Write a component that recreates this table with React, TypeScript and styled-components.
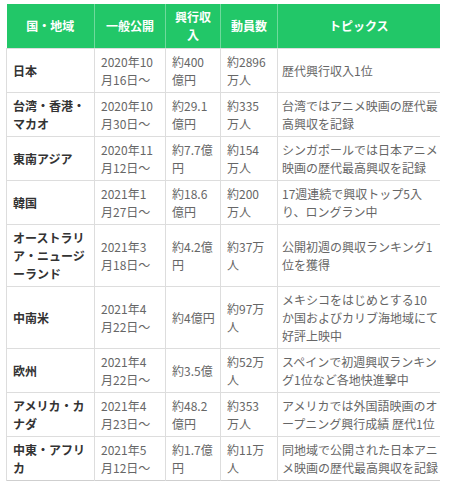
import React from 'react';
import styled, { createGlobalStyle } from 'styled-components';

const GlobalStyle = createGlobalStyle`
    html, body {
        margin: 0;
        padding: 0;
        background: #ffffff;
    }
    body {
        font-family: 'Noto Sans CJK JP', 'Noto Sans', sans-serif;
    }
`;

const Wrapper = styled.div`
    padding: 4px 0 0 6px;
`;

const Table = styled.table`
    width: 433px;
    table-layout: fixed;
    border-collapse: collapse;
    font-size: 12px;
    line-height: 18px;
    border-bottom: 1px solid #cfcfcf;
`;

const HeadCell = styled.th`
    background: #22c768;
    color: #ffffff;
    font-weight: bold;
    text-align: center;
    vertical-align: middle;
    height: 36px;
    padding: 4px 6px;
    line-height: 18px;
    white-space: nowrap;
    border-left: 1px solid rgba(255, 255, 255, 0.35);
    border-bottom: 1px solid #dddddd;

    &:first-child {
        border-left: none;
    }
`;

const Row = styled.tr`
    border-top: 1px solid #dddddd;
`;

const Cell = styled.td<{ $head?: boolean; $topic?: boolean }>`
    padding: 4px ${(p) => (p.$topic ? '4px' : '6px')} 3px;
    vertical-align: middle;
    text-align: left;
    white-space: nowrap;
    line-height: 18px;
    color: ${(p) => (p.$head ? '#333333' : '#666666')};
    font-weight: ${(p) => (p.$head ? 'bold' : 'normal')};
    border-left: 1px solid #dddddd;
`;

const Line = styled.span`
    display: block;
    height: 18px;
`;

interface Entry {
    region: string[];
    release: string[];
    gross: string[];
    admissions: string[];
    topic: string[];
}

const entries: Entry[] = [
    {
        region: ['日本'],
        release: ['2020年10', '月16日～'],
        gross: ['約400', '億円'],
        admissions: ['約2896', '万人'],
        topic: ['歴代興行収入1位']
    },
    {
        region: ['台湾・香港・', 'マカオ'],
        release: ['2020年10', '月30日～'],
        gross: ['約29.1', '億円'],
        admissions: ['約335', '万人'],
        topic: ['台湾ではアニメ映画の歴代最', '高興収を記録']
    },
    {
        region: ['東南アジア'],
        release: ['2020年11', '月12日～'],
        gross: ['約7.7億', '円'],
        admissions: ['約154', '万人'],
        topic: ['シンガポールでは日本アニメ', '映画の歴代最高興収を記録']
    },
    {
        region: ['韓国'],
        release: ['2021年1', '月27日～'],
        gross: ['約18.6', '億円'],
        admissions: ['約200', '万人'],
        topic: ['17週連続で興収トップ5入', 'り、ロングラン中']
    },
    {
        region: ['オーストラリ', 'ア・ニュージ', 'ーランド'],
        release: ['2021年3', '月18日～'],
        gross: ['約4.2億', '円'],
        admissions: ['約37万', '人'],
        topic: ['公開初週の興収ランキング1', '位を獲得']
    },
    {
        region: ['中南米'],
        release: ['2021年4', '月22日～'],
        gross: ['約4億円'],
        admissions: ['約97万', '人'],
        topic: ['メキシコをはじめとする10', 'か国およびカリブ海地域にて', '好評上映中']
    },
    {
        region: ['欧州'],
        release: ['2021年4', '月22日～'],
        gross: ['約3.5億'],
        admissions: ['約52万', '人'],
        topic: ['スペインで初週興収ランキン', 'グ1位など各地快進撃中']
    },
    {
        region: ['アメリカ・カ', 'ナダ'],
        release: ['2021年4', '月23日～'],
        gross: ['約48.2', '億円'],
        admissions: ['約353', '万人'],
        topic: ['アメリカでは外国語映画のオ', 'ープニング興行成績 歴代1位']
    },
    {
        region: ['中東・アフリ', 'カ'],
        release: ['2021年5', '月12日～'],
        gross: ['約1.7億', '円'],
        admissions: ['約11万', '人'],
        topic: ['同地域で公開された日本アニ', 'メ映画の歴代最高興収を記録']
    }
];

const Lines = ({ lines }: { lines: string[] }) => (
    <>
        {lines.map((line, i) => (
            <Line key={i}>{line}</Line>
        ))}
    </>
);

const App = () => {
    return (
        <>
            <GlobalStyle />
            <Wrapper>
                <Table>
                    <colgroup>
                        <col style={{ width: 88 }} />
                        <col style={{ width: 71 }} />
                        <col style={{ width: 55 }} />
                        <col style={{ width: 57 }} />
                        <col style={{ width: 162 }} />
                    </colgroup>
                    <thead>
                        <tr>
                            <HeadCell>国・地域</HeadCell>
                            <HeadCell>一般公開</HeadCell>
                            <HeadCell>
                                <Lines lines={['興行収', '入']} />
                            </HeadCell>
                            <HeadCell>動員数</HeadCell>
                            <HeadCell>トピックス</HeadCell>
                        </tr>
                    </thead>
                    <tbody>
                        {entries.map((e) => (
                            <Row key={e.region.join('')}>
                                <Cell $head>
                                    <Lines lines={e.region} />
                                </Cell>
                                <Cell>
                                    <Lines lines={e.release} />
                                </Cell>
                                <Cell>
                                    <Lines lines={e.gross} />
                                </Cell>
                                <Cell>
                                    <Lines lines={e.admissions} />
                                </Cell>
                                <Cell $topic>
                                    <Lines lines={e.topic} />
                                </Cell>
                            </Row>
                        ))}
                    </tbody>
                </Table>
            </Wrapper>
        </>
    );
};

export default App;
